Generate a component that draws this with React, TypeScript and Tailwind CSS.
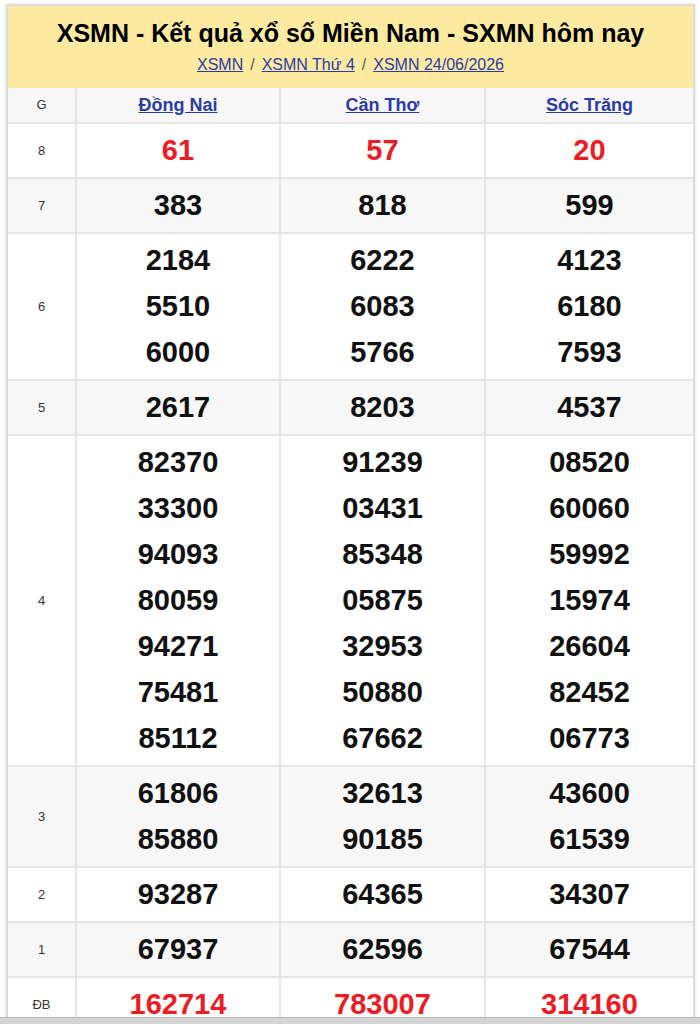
import React from 'react';

interface Prize {
  label: string;
  values: string[][]; // one list per province
  red?: boolean;
}

const provinces = ['Đồng Nai', 'Cần Thơ', 'Sóc Trăng'];

const prizes: Prize[] = [
  { label: '8', values: [['61'], ['57'], ['20']], red: true },
  { label: '7', values: [['383'], ['818'], ['599']] },
  {
    label: '6',
    values: [
      ['2184', '5510', '6000'],
      ['6222', '6083', '5766'],
      ['4123', '6180', '7593'],
    ],
  },
  { label: '5', values: [['2617'], ['8203'], ['4537']] },
  {
    label: '4',
    values: [
      ['82370', '33300', '94093', '80059', '94271', '75481', '85112'],
      ['91239', '03431', '85348', '05875', '32953', '50880', '67662'],
      ['08520', '60060', '59992', '15974', '26604', '82452', '06773'],
    ],
  },
  {
    label: '3',
    values: [
      ['61806', '85880'],
      ['32613', '90185'],
      ['43600', '61539'],
    ],
  },
  { label: '2', values: [['93287'], ['64365'], ['34307']] },
  { label: '1', values: [['67937'], ['62596'], ['67544']] },
  { label: 'ĐB', values: [['162714'], ['783007'], ['314160']], red: true },
];

const font = { fontFamily: '"Liberation Sans", Arial, sans-serif' };

function PrizeRow({ prize, shaded }: { prize: Prize; shaded: boolean }) {
  return (
    <div
      className={`grid grid-cols-[69px_204px_205px_1fr] border-b-2 border-[#e3e5e9] ${
        shaded ? 'bg-[#f7f7f7]' : 'bg-white'
      }`}
    >
      <div className="flex items-center justify-center border-r-2 border-[#e3e5e9] text-[13px] text-[#333]">
        {prize.label}
      </div>
      {prize.values.map((list, i) => (
        <div
          key={i}
          className={`flex flex-col items-center pt-[3px] pb-[4px] ${
            i < 2 ? 'border-r-2 border-[#e3e5e9]' : ''
          }`}
        >
          {list.map((n, j) => (
            <span
              key={j}
              className={`text-[29px] font-bold leading-[46px] ${
                prize.red ? 'text-[#ed1c24]' : 'text-[#111]'
              }`}
            >
              {n}
            </span>
          ))}
        </div>
      ))}
    </div>
  );
}

export default function App() {
  return (
    <div className="flex h-[1024px] flex-col overflow-hidden bg-white" style={font}>
      <div className="min-h-0 flex-1 overflow-hidden pt-[4px] pl-[6px]">
        <div className="w-[689px] border-2 border-[#dcdde0] shadow-[0_0_3px_rgba(0,0,0,0.15)]">
          {/* Tiêu đề */}
          <div className="flex h-[82px] flex-col items-center bg-[#fdeaa1] pt-[11px]">
            <h1 className="text-[25px] leading-[32px] font-bold text-black">
              XSMN - Kết quả xổ số Miền Nam - SXMN hôm nay
            </h1>
            <div className="mt-[4px] flex items-center gap-[7px] text-[16px] text-[#2b3ba6]">
              <a className="underline">XSMN</a>
              <span className="text-[#555]">/</span>
              <a className="underline">XSMN Thứ 4</a>
              <span className="text-[#555]">/</span>
              <a className="underline">XSMN 24/06/2026</a>
            </div>
          </div>

          {/* Bảng kết quả */}
          <div className="grid h-[36px] grid-cols-[69px_204px_205px_1fr] border-b-2 border-[#e3e5e9] bg-[#f7f7f7]">
            <div className="flex items-center justify-center border-r-2 border-[#e3e5e9] text-[13px] text-[#333]">
              G
            </div>
            {provinces.map((p, i) => (
              <div
                key={p}
                className={`flex items-center justify-center text-[18px] font-bold text-[#2b3ba6] underline ${
                  i < 2 ? 'border-r-2 border-[#e3e5e9]' : ''
                }`}
              >
                {p}
              </div>
            ))}
          </div>
          {prizes.map((prize, i) => (
            <PrizeRow key={prize.label} prize={prize} shaded={i % 2 === 1} />
          ))}
        </div>
      </div>
      <div className="h-[7px] border-t border-[#b8b8b8] bg-[#d4d4d4]" />
    </div>
  );
}
